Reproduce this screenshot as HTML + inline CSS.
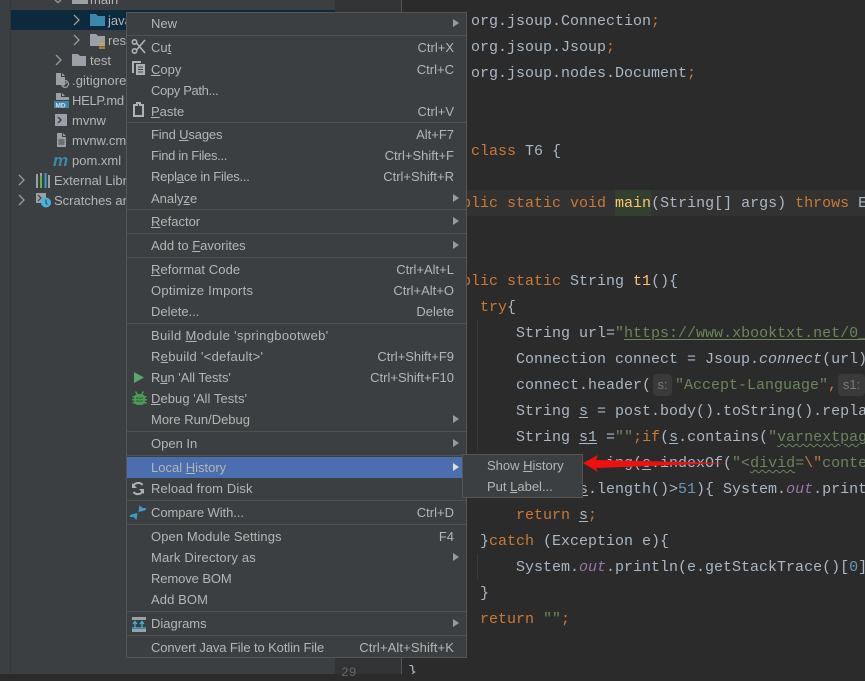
<!DOCTYPE html>
<html><head><meta charset="utf-8">
<style>
html,body{margin:0;padding:0;width:865px;height:674px;overflow:hidden;background:#2b2b2b}
.a{position:absolute}
#tree{position:absolute;left:0;top:0;width:335px;height:674px;background:#3c3f41;overflow:hidden;font:13px "Liberation Sans",sans-serif;color:#b5b5b5}
#tree span.t{position:absolute;white-space:nowrap;line-height:20px;height:20px;margin-top:1px}
#gut{position:absolute;left:335px;top:0;width:66px;height:674px;background:#313335;border-right:1px solid #555}
#code{position:absolute;left:0;top:0;width:865px;height:674px;overflow:hidden;font:15px/26px "Liberation Mono",monospace;color:#a9b7c6;white-space:pre}
#code div{position:absolute;height:26px}
#code div.tx{margin-top:1px}
.k{color:#cc7832}.s{color:#6a8759}.n{color:#6897bb}.f{color:#9876aa;font-style:italic}.i{font-style:italic}.m{color:#ffc66d}
.u{text-decoration:underline;text-underline-offset:2px}
.w{text-decoration:underline wavy #6a8759;text-decoration-thickness:1px;text-underline-offset:2px}
#code div.h{position:absolute;height:22px;background:#3a3a3a;border-radius:4px;font-size:13px;line-height:22px;color:#787878;text-align:center;font-family:"Liberation Sans",sans-serif}
#menu{position:absolute;left:126px;top:12px;width:339px;height:644px;background:#3c3f41;border:1px solid #555;font:13px "Liberation Sans",sans-serif;color:#b5b5b5}
#menu .r{position:absolute;left:0;width:339px;height:20px;line-height:20px;margin-top:1px}
#menu .l{position:absolute;left:24px;white-space:nowrap}
#menu .c{position:absolute;right:12px;white-space:nowrap}
#menu .ar{position:absolute;left:326px;top:5px;width:0;height:0;border-left:6px solid #9a9a9a;border-top:4px solid transparent;border-bottom:4px solid transparent}
#menu .sp{position:absolute;left:0;width:339px;height:1px;background:#515151}
#menu u,#sub u{text-underline-offset:1px}
#sub{position:absolute;left:462px;top:454px;width:119px;height:42px;background:#3c3f41;border:1px solid #555;font:13px "Liberation Sans",sans-serif;color:#b5b5b5}
#sub div{position:absolute;left:24px;white-space:nowrap;line-height:20px;margin-top:1px}
</style></head><body>

<div id="code">
<div class="tx" style="left:408px;top:8px">import org.jsoup.Connection<span class="k">;</span></div>
<div class="tx" style="left:408px;top:34px">import org.jsoup.Jsoup<span class="k">;</span></div>
<div class="tx" style="left:408px;top:60px">import org.jsoup.nodes.Document<span class="k">;</span></div>
<div class="tx" style="left:408px;top:138px"><span class="k">public class</span> T6 {</div>
<div style="left:402px;top:190px;width:463px;background:#323232"></div>
<div style="left:615px;top:190px;width:36px;background:#32402f"></div>
<div class="tx" style="left:444px;top:190px"><span class="k">public static void</span> <span class="m">main</span>(String[] args) <span class="k">throws</span> Exception</div>
<div class="tx" style="left:444px;top:268px"><span class="k">public static</span> String <span class="m">t1</span>(){</div>
<div class="tx" style="left:480px;top:294px"><span class="k">try</span>{</div>
<div style="left:477px;top:320px;width:1px;height:130px;background:#3a3a3a"></div>
<div style="left:477px;top:554px;width:1px;height:26px;background:#3a3a3a"></div>
<div class="tx" style="left:516px;top:320px">String url=<span class="s">"<span class="u">https://www.xbooktxt.net/0_0/0.html</span></span></div>
<div class="tx" style="left:516px;top:346px">Connection connect = Jsoup.<span class="i">connect</span>(url);</div>
<div class="tx" style="left:516px;top:372px">connect.header(</div>
<div class="h" style="left:653px;top:374px;width:19px;">s:</div>
<div class="tx" style="left:675px;top:372px"><span class="s">"Accept-Language"</span><span class="k">,</span></div>
<div class="h" style="left:838px;top:374px;width:27px;">s1:</div>
<div class="tx" style="left:516px;top:398px">String <span class="u">s</span> = post.body().toString().replace</div>
<div class="tx" style="left:516px;top:424px">String <span class="u">s1</span> =<span class="s">""</span><span class="k">;if</span>(<span class="u">s</span>.contains(<span class="s">"<span class="w">varnextpage</span></span></div>
<div class="tx" style="left:606px;top:450px">ing(<span class="u">s</span>.indexOf(<span class="s">"&lt;<span class="w">divid</span>=<span class="k">\"</span>conte</span></div>
<div class="tx" style="left:579px;top:476px"><span class="u">s</span>.length()&gt;<span class="n">51</span>){ System.<span class="f">out</span>.print</div>
<div class="tx" style="left:516px;top:502px"><span class="k">return</span> <span class="u">s</span><span class="k">;</span></div>
<div class="tx" style="left:480px;top:528px">}<span class="k">catch</span> (Exception e){</div>
<div class="tx" style="left:516px;top:554px">System.<span class="f">out</span>.println(e.getStackTrace()[<span class="n">0</span>]</div>
<div class="tx" style="left:480px;top:580px">}</div>
<div class="tx" style="left:480px;top:606px"><span class="k">return</span> <span class="s">""</span><span class="k">;</span></div>
<div class="tx" style="left:408px;top:659px">}</div>
</div>

<div id="gut">
  <div class="a" style="left:17px;top:-13px;font:13px/16px 'Liberation Mono',monospace;color:#777">18</div>
  <div class="a" style="left:6px;top:665px;font:13px/16px 'Liberation Mono',monospace;color:#666">29</div>
</div>

<div id="tree">
  <div class="a" style="left:10px;top:0;width:1px;height:674px;background:#333537"></div>
  <div class="a" style="left:11px;top:10px;width:324px;height:20px;background:#0d293e"></div>
  <svg class="a" style="left:0;top:0" width="335" height="220" fill="none">
    <path d="M55 0l3 2.500 3-2.500" stroke="#9a9a9a" stroke-width="1.300"/>
    <path d="M74 15l5 5-5 5M74 35l5 5-5 5M56 55l5 5-5 5M19 175l5 5-5 5M19 195l5 5-5 5" stroke="#9a9a9a" stroke-width="1.300"/>
    <path d="M72 -3h7l2 2h7v5h-16z" fill="#9aa0a5"/>
    <path d="M90 14h6l2 2h7v10h-15z" fill="#3d86ad"/>
    <path d="M90 34h6l2 2h7v10h-15z" fill="#9aa0a5"/>
    <path d="M99 43h6v1.200h-6zM99 45.200h6v1.200h-6zM99 47.400h6v1.200h-6z" fill="#d9a343"/>
    <path d="M72 54h6l2 2h6v10h-14z" fill="#9aa0a5"/>
    <path d="M56 73h5v4h4v8h-9zM62 73l3 3h-3z" fill="#9aa0a5"/>
    <circle cx="65" cy="84" r="3.500" stroke="#9aa0a5" stroke-width="1.200"/><path d="M63 86l4-4" stroke="#9aa0a5"/>
    <path d="M56 93h5v4h8v3h-13zM62 93l3 3h-3z" fill="#9aa0a5"/>
    <rect x="54" y="101" width="15" height="7" fill="#3d86ad"/>
    <text x="55.500" y="107.300" font-family="Liberation Sans" font-size="6.500" font-weight="bold" fill="#dde">MD</text>
    <rect x="55" y="114" width="12" height="12" fill="#9aa0a5"/><path d="M58 117l3 3-3 3" stroke="#3c3f41" stroke-width="1.500"/>
    <path d="M57 133h5v4h4v10h-9zM63 133l3 3h-3z" fill="#9aa0a5"/><path d="M58.500 140h6M58.500 142h6M58.500 144h6" stroke="#3c3f41"/>
    <text x="53" y="166" font-family="Liberation Sans" font-size="17" font-weight="bold" font-style="italic" fill="#3d86ad">m</text>
    <path d="M37 174v14M41 173v15M45.500 173v15M49 175v13" stroke="#9aa0a5" stroke-width="2"/><path d="M41 176v12" stroke="#62b543" stroke-width="2"/><path d="M45.500 173v15" stroke="#3d9ad1" stroke-width="2"/>
    <path d="M36 193h10v10h-10z" fill="#9aa0a5"/><path d="M38 195l3 3-3 3" stroke="#3c3f41" stroke-width="1.200"/>
    <circle cx="46" cy="202.500" r="5" fill="#40b6e0"/><path d="M46 199.500v3.500l1.500 1.500" stroke="#3c3f41"/>
  </svg>
  <span class="t" style="left:90px;top:-11px">main</span>
  <span class="t" style="left:108px;top:10px">java</span>
  <span class="t" style="left:108px;top:30px">resources</span>
  <span class="t" style="left:90px;top:50px">test</span>
  <span class="t" style="left:72px;top:70px;letter-spacing:.1px">.gitignore</span>
  <span class="t" style="left:72px;top:90px;letter-spacing:-.3px">HELP.md</span>
  <span class="t" style="left:72px;top:110px">mvnw</span>
  <span class="t" style="left:72px;top:130px">mvnw.cmd</span>
  <span class="t" style="left:72px;top:150px">pom.xml</span>
  <span class="t" style="left:54px;top:170px">External Libraries</span>
  <span class="t" style="left:54px;top:190px">Scratches and Consoles</span>
</div>

<div id="menu">
  <div class="r" style="top:0px"><span class="l">New</span><i class="ar"></i></div>
  <div class="sp" style="top:22px"></div>
  <div class="r" style="top:24px"><span class="l">Cu<u>t</u></span><span class="c">Ctrl+X</span></div>
  <div class="r" style="top:46px"><span class="l"><u>C</u>opy</span><span class="c">Ctrl+C</span></div>
  <div class="r" style="top:67px"><span class="l" style="letter-spacing:-.35px">Copy Path...</span></div>
  <div class="r" style="top:88px"><span class="l"><u>P</u>aste</span><span class="c">Ctrl+V</span></div>
  <div class="sp" style="top:109px"></div>
  <div class="r" style="top:111px"><span class="l" style="letter-spacing:-.15px">Find <u>U</u>sages</span><span class="c">Alt+F7</span></div>
  <div class="r" style="top:132px"><span class="l" style="letter-spacing:-.3px">Find in Files...</span><span class="c">Ctrl+Shift+F</span></div>
  <div class="r" style="top:153px"><span class="l" style="letter-spacing:-.25px">Repl<u>a</u>ce in Files...</span><span class="c">Ctrl+Shift+R</span></div>
  <div class="r" style="top:175px"><span class="l">Analy<u>z</u>e</span><i class="ar"></i></div>
  <div class="sp" style="top:196px"></div>
  <div class="r" style="top:198px"><span class="l"><u>R</u>efactor</span><i class="ar"></i></div>
  <div class="sp" style="top:220px"></div>
  <div class="r" style="top:222px"><span class="l">Add to <u>F</u>avorites</span><i class="ar"></i></div>
  <div class="sp" style="top:244px"></div>
  <div class="r" style="top:246px"><span class="l" style="letter-spacing:.08px"><u>R</u>eformat Code</span><span class="c">Ctrl+Alt+L</span></div>
  <div class="r" style="top:267px"><span class="l" style="letter-spacing:.25px">Optimize Imports</span><span class="c">Ctrl+Alt+O</span></div>
  <div class="r" style="top:288px"><span class="l">Delete...</span><span class="c">Delete</span></div>
  <div class="sp" style="top:310px"></div>
  <div class="r" style="top:312px"><span class="l" style="letter-spacing:.33px">Build <u>M</u>odule 'springbootweb'</span></div>
  <div class="r" style="top:333px"><span class="l" style="letter-spacing:.28px">R<u>e</u>build '&lt;default&gt;'</span><span class="c">Ctrl+Shift+F9</span></div>
  <div class="r" style="top:354px"><span class="l" style="letter-spacing:-.05px">R<u>u</u>n 'All Tests'</span><span class="c">Ctrl+Shift+F10</span></div>
  <div class="r" style="top:375px"><span class="l" style="letter-spacing:.06px"><u>D</u>ebug 'All Tests'</span></div>
  <div class="r" style="top:396px"><span class="l">More Run/Debug</span><i class="ar"></i></div>
  <div class="sp" style="top:418px"></div>
  <div class="r" style="top:420px"><span class="l">Open In</span><i class="ar"></i></div>
  <div class="sp" style="top:442px"></div>
  <div class="a" style="left:0;top:444px;width:339px;height:21px;background:#4b6eaf"></div>
  <div class="r" style="top:444px"><span class="l">Local <u>H</u>istory</span><i class="ar" style="border-left-color:#ddd"></i></div>
  <div class="r" style="top:465px"><span class="l" style="letter-spacing:.12px">Reload from Disk</span></div>
  <div class="sp" style="top:487px"></div>
  <div class="r" style="top:489px"><span class="l" style="letter-spacing:-.07px">Compare With...</span><span class="c">Ctrl+D</span></div>
  <div class="sp" style="top:511px"></div>
  <div class="r" style="top:513px"><span class="l" style="letter-spacing:.1px">Open Module Settings</span><span class="c">F4</span></div>
  <div class="r" style="top:534px"><span class="l" style="letter-spacing:.18px">Mark Directory as</span><i class="ar"></i></div>
  <div class="r" style="top:555px"><span class="l" style="letter-spacing:-.1px">Remove BOM</span></div>
  <div class="r" style="top:576px"><span class="l" style="letter-spacing:.1px">Add BOM</span></div>
  <div class="sp" style="top:598px"></div>
  <div class="r" style="top:600px"><span class="l">Diagrams</span><i class="ar"></i></div>
  <div class="sp" style="top:622px"></div>
  <div class="r" style="top:624px"><span class="l" style="letter-spacing:-.1px">Convert Java File to Kotlin File</span><span class="c" style="letter-spacing:.12px">Ctrl+Alt+Shift+K</span></div>

  <svg class="a" style="left:0;top:0;overflow:visible" width="40" height="645" fill="none">
    <g stroke="#afb1b3" stroke-width="1.600"><circle cx="7.500" cy="29" r="2.200"/><circle cx="7.500" cy="38" r="2.200"/><path d="M9.500 30L18 40M9.500 37L18 27"/></g>
    <path d="M5 48h9v2h-7v10h-2z" fill="#afb1b3"/><path d="M9 51h9v11h-9z" fill="#afb1b3"/><path d="M11 54h5M11 56.500h5M11 59h5" stroke="#3c3f41"/>
    <path d="M7 92h3v-2h3v2h3v11h-9z" fill="none" stroke="#afb1b3" stroke-width="2"/>
    <path d="M7 359l10 5.500-10 5.500z" fill="#59a869"/>
    <g fill="#499c54"><rect x="7" y="381" width="11" height="11" rx="4"/><path d="M5.500 383h14v1.500h-14zM5 386h15v1.500h-15zM5.500 389h14v1.500h-14zM9 378l2 3h3l2-3 1 1-2 3h-5l-2-3z"/></g>
    <path d="M9 385h7M9 388h7" stroke="#3c3f41" stroke-width=".8"/>
    <path d="M15.500 472a5.500 5.500 0 0 0-9.500 1.500M6.500 479a5.500 5.500 0 0 0 9.500-1.500" stroke="#afb1b3" stroke-width="2"/><path d="M5 470v5h5zM17 481v-5h-5z" fill="#afb1b3"/>
    <path d="M11.500 499l1-7 5.500 5.500zM10.500 500l-1 7-5.500-5.500z" fill="#3d9ad1"/>
    <path d="M15 496h4M7 503h-4" stroke="#3d9ad1" stroke-width="2"/>
    <path d="M5 604h14v3h-14zM5 616h14v3h-14z" fill="#9aa0a5"/>
    <path d="M8 615v-6M6 611l2-2.500 2 2.500M15 615v-6M13 611l2-2.500 2 2.500M5 615h14" stroke="#40b6e0" stroke-width="1.200"/>
  </svg>
</div>

<div id="sub">
  <div style="top:0px">Show <u>H</u>istory</div>
  <div style="top:21px">Put <u>L</u>abel...</div>
</div>

<svg class="a" style="left:0;top:0" width="865" height="674">
  <path d="M583 463L598 455L596 460L727 463L596 468L598 472Z" fill="#f01010"/>
</svg>
</body></html>
